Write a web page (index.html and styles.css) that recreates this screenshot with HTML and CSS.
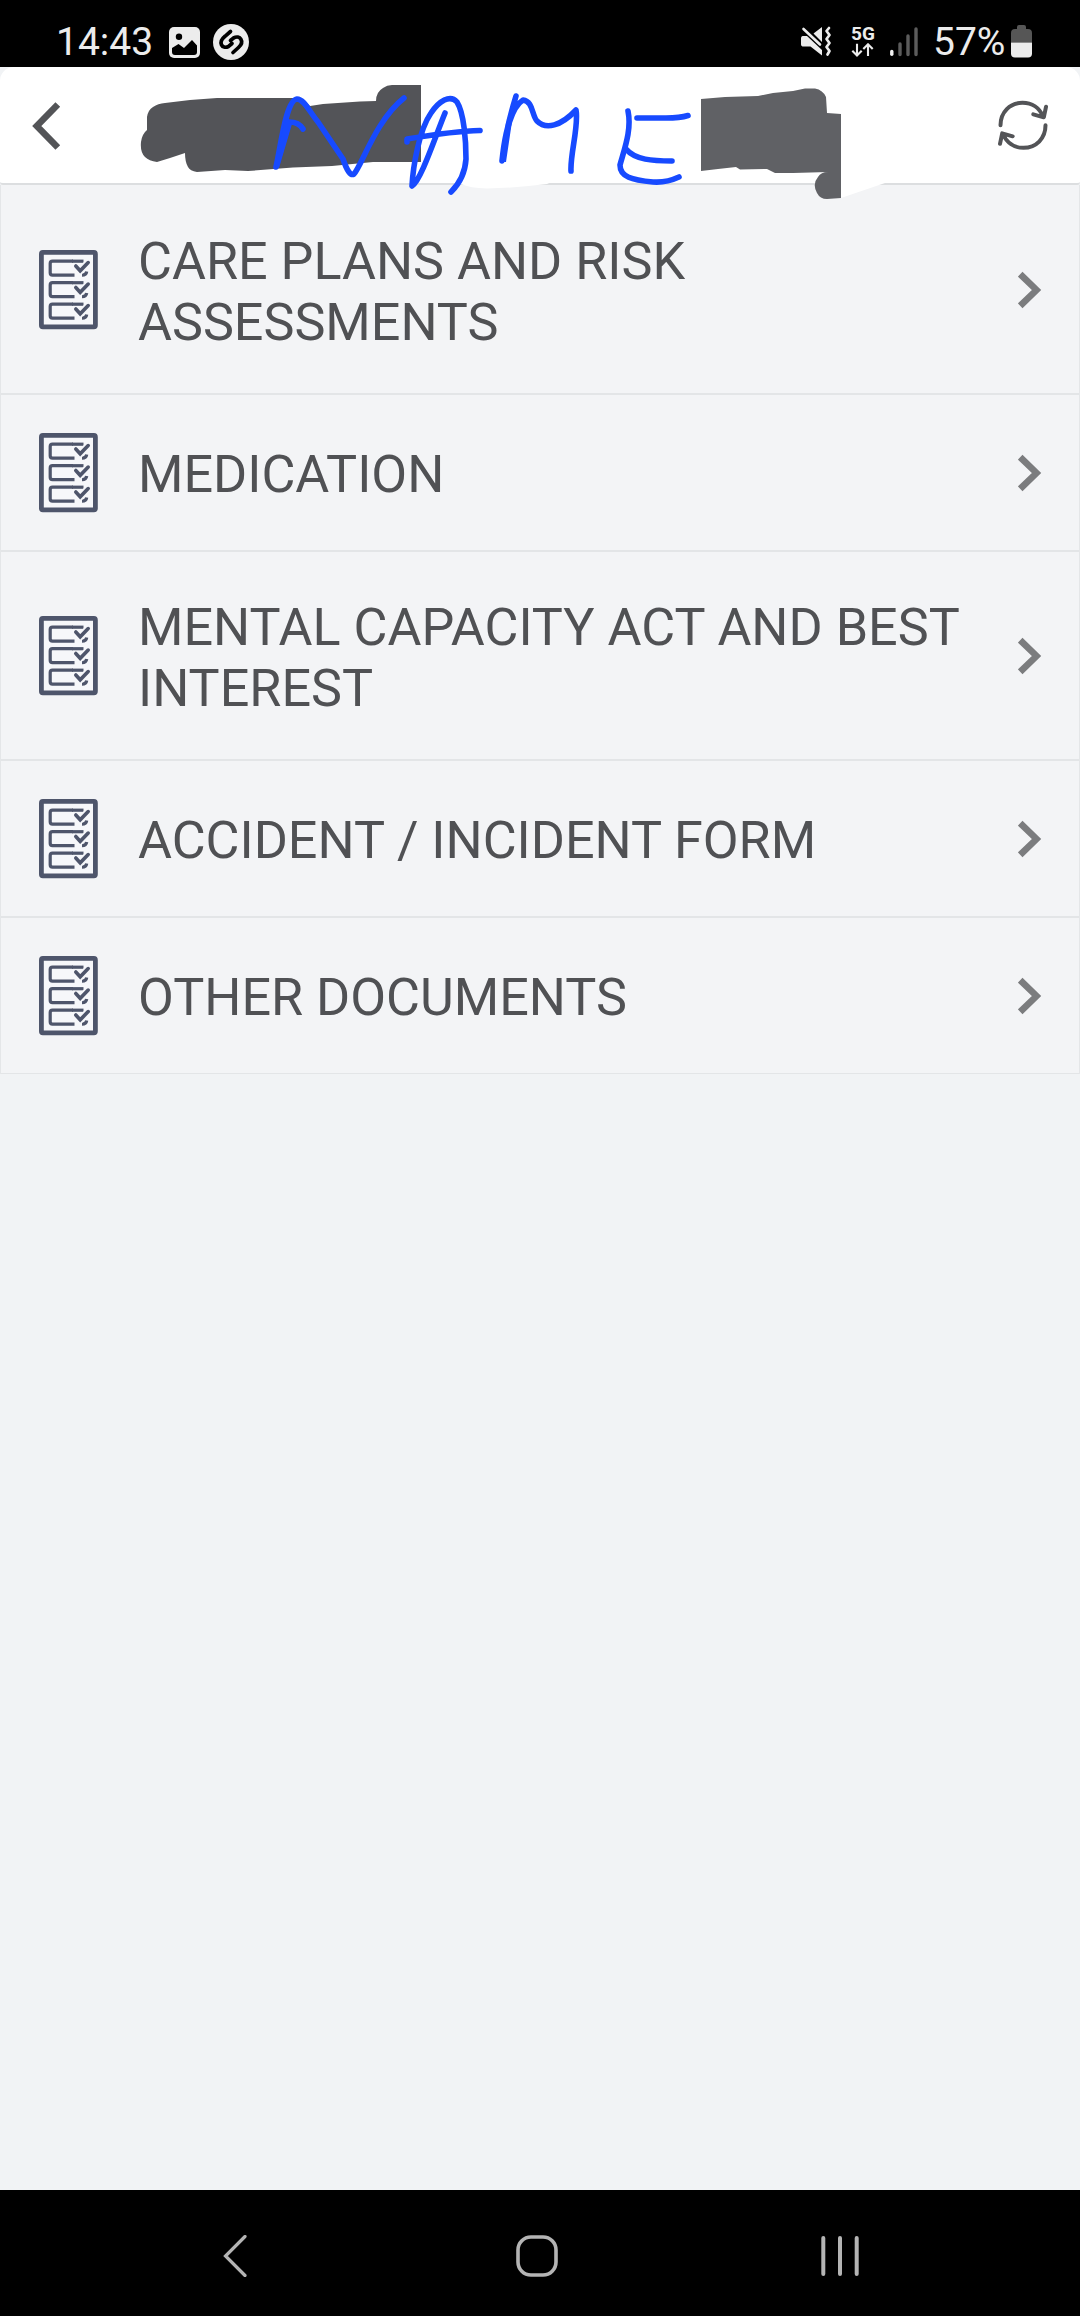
FILE: index.html
```html
<!DOCTYPE html>
<html lang="en">
<head>
<meta charset="utf-8">
<title>Documents</title>
<link rel="stylesheet" href="styles.css">
</head>
<body>
<svg class="defs" width="0" height="0" aria-hidden="true">
  <symbol id="form" viewBox="0 0 59 80">
    <rect x="2.4" y="2.4" width="54" height="74.4" rx="1.5" fill="#f6f7fa" stroke="#4e556b" stroke-width="4.8"/>
    <g id="line">
      <path d="M34 11.2H13.5Q11.2 11.2 11.2 13.5V22.8Q11.2 25.1 13.5 25.1H35.5M43 25.2Q47.2 25.2 47.7 21.5" fill="none" stroke="#4e556b" stroke-width="3.2"/>
      <path d="M33 11.2H44.5" stroke="#4e556b" stroke-width="3.2"/>
      <path d="M36.8 16L41.2 20.8L49.2 12.6" fill="none" stroke="#f6f7fa" stroke-width="7"/>
      <path d="M36.8 16L41.2 20.8L49.2 12.6" fill="none" stroke="#4e556b" stroke-width="3.6" stroke-linecap="round"/>
    </g>
    <use href="#line" y="21.5"/>
    <use href="#line" y="43"/>
  </symbol>
  <symbol id="chevron" viewBox="0 0 24 38">
    <path d="M2.2 3.2L18.5 19L2.2 34.800" fill="none" stroke="#7b7c7e" stroke-width="6.600"/>
  </symbol>
</svg>
<div class="screen">
  <div class="status">
    <span class="clock">14:43</span>
    <svg class="photo" width="31" height="31" viewBox="0 0 31 31">
      <rect width="31" height="31" rx="5" fill="#ececec"/>
      <circle cx="10" cy="9.7" r="3.2" fill="#000"/>
      <path d="M3 21L9.5 17L15 21L23 13L28 18.5V25Q28 28 25 28H6Q3 28 3 25Z" fill="#000"/>
    </svg>
    <svg class="shazam" width="36" height="36" viewBox="0 0 36 36">
      <circle cx="18" cy="18" r="18" fill="#ececec"/>
      <path d="M17.5 7.5L12 12.3C4.5 18.5 9 25.5 15.5 22.5L19 19.5M17.5 16.5L20.5 14C27 10.5 32 17.5 25.5 23.5L20 28.5" fill="none" stroke="#000" stroke-width="3.7" stroke-linecap="round"/>
    </svg>
    <span class="space"></span>
    <svg class="mute" width="31" height="31" viewBox="0 0 31 31">
      <path d="M1.5 10H6L21 24V29.5L9.5 20.5H1.5Q0 20 0 18.5V12Q0 10.5 1.5 10ZM12.5 7.5L21 1V16Z" fill="#ececec"/>
      <path d="M2.5 3L19 18.5" stroke="#ececec" stroke-width="2.6" stroke-linecap="round"/>
      <path d="M28 2L25.5 5L28.5 9L25.5 13L28.5 17L25.5 21L28.5 25L26.5 28.5" fill="none" stroke="#ececec" stroke-width="2.7" stroke-linejoin="round" stroke-linecap="round"/>
    </svg>
    <span class="network">
      <span class="fiveg">5G</span>
      <svg width="23" height="14" viewBox="0 0 23 14">
        <path d="M6 .8V12M1.3 7.8L6 12.5L10.7 7.8M17 13V2M12.3 6L17 1.3L21.7 6" fill="none" stroke="#ececec" stroke-width="2.1"/>
      </svg>
    </span>
    <svg class="signal" width="28" height="30" viewBox="0 0 28 30">
      <g stroke-width="3.4" stroke-linecap="round">
        <path d="M1.8 24.5V27.3" stroke="#f2f2f2"/>
        <path d="M10 17V27.5M18 9V27.5M26 2V27.5" stroke="#5c5c5c"/>
      </g>
    </svg>
    <span class="percent">57%</span>
    <svg class="battery" width="21" height="33" viewBox="0 0 21 33">
      <path d="M6 2Q6 0 8 0H13Q15 0 15 2V4H17Q21 4 21 8V17.5H0V8Q0 4 4 4H6Z" fill="#565656"/>
      <path d="M0 17.5H21V28.5Q21 32.5 17 32.5H4Q0 32.5 0 28.5Z" fill="#ececec"/>
    </svg>
  </div>

  <header class="header">
    <svg class="back" width="29" height="48" viewBox="0 0 29 48">
      <path d="M25.8 2.5L4.800 24L25.8 45.5" fill="none" stroke="#535457" stroke-width="6.600"/>
    </svg>
    <svg class="refresh" width="50" height="50" viewBox="0 0 50 50">
      <g id="arc" fill="none" stroke="#535457" stroke-width="4" stroke-linecap="round" stroke-linejoin="round">
        <path d="M2.5 25.3C2.5 12 12 2.8 24.5 2.8C34 2.8 41.5 8 45 16.5M35.3 14.3L45.8 17.3L48 6.8"/>
      </g>
      <use href="#arc" transform="rotate(180 25 25.3)"/>
    </svg>
    <svg class="scribble" width="1080" height="140" viewBox="0 67 1080 140">
      <path d="M455 178H560L547 184Q515 188 487 188.500Q470 188 461 184ZM835 178H900L885 183L841 198Z" fill="#fff"/>
      <path d="M141 142Q142 134 147 130V117Q148 110 153 107Q158 103.500 165 103L190 100L217 98H238L262 98H293Q304 99 310 106L323 104L360 101.500L376 101Q376 92 383 88Q387 85 392 85H421V162H373L332 166L293 167.500L248 171L225 170L197 172Q190 171 188 167Q185 162 185 153L170 158L157 162Q149 161 145 157Q140 152 141 142Z" fill="#535458"/>
      <path d="M701 99L725 97L758 96L773 93L793 91L805 88.500H815Q823 90 826 97L827 113L841 114V198L827 199Q820 199 817 193Q812 184 818 177Q821 172 828 172L793 173H775L767 169L740 169.500L736 167L718 169L701 171Z" fill="#606165"/>
      <g fill="none" stroke="#174aff" stroke-width="5.600" stroke-linecap="round" stroke-linejoin="round">
        <path d="M276 167C281 145 286 100 297 99C304 99 309 111 318 122L343 159Q349 177 354 174C362 165 376 120 404 98M276 167L289 122Q299 122 303 129M277 162L288 126"/>
        <path d="M445 113C434 140 421 180 412 186C413 167 419 130 431 113C439 101 450 94 457 102C464 113 466 141 466 159C465 176 456 187 451 192M407 142L407 139C425 136 455 131 480 130.500"/>
        <path d="M516 96C507 125 504 144 502 161C505 131 512 107 523 100C533 101 532 116 537 121C546 130 561 126 576 110C579 126 570 154 571 171"/>
        <path d="M628 111C632 130 624 150 620 165C620 177 632 180 653 182Q666 183 679 177M626 149C635 160 653 161 672 161M637 118H666Q680 118 688 115.500"/>
      </g>
      <path d="M274 166L284 124H292L279 168ZM500 162L506 123L514 108L506 162Z" fill="#174aff"/>
    </svg>
  </header>

  <main class="list">
    <div class="row tall"><svg class="form"><use href="#form"/></svg><span class="label">CARE PLANS AND RISK ASSESSMENTS</span><svg class="chevron"><use href="#chevron"/></svg></div>
    <div class="row"><svg class="form"><use href="#form"/></svg><span class="label">MEDICATION</span><svg class="chevron"><use href="#chevron"/></svg></div>
    <div class="row tall"><svg class="form"><use href="#form"/></svg><span class="label">MENTAL CAPACITY ACT AND BEST INTEREST</span><svg class="chevron"><use href="#chevron"/></svg></div>
    <div class="row"><svg class="form"><use href="#form"/></svg><span class="label">ACCIDENT / INCIDENT FORM</span><svg class="chevron"><use href="#chevron"/></svg></div>
    <div class="row"><svg class="form"><use href="#form"/></svg><span class="label">OTHER DOCUMENTS</span><svg class="chevron"><use href="#chevron"/></svg></div>
  </main>

  <nav class="nav">
    <svg width="24" height="42" viewBox="0 0 24 42"><path d="M22 1.500L2.500 21L22 40.500" fill="none" stroke="#b4b4b4" stroke-width="3.200" stroke-linecap="round"/></svg>
    <svg class="home" width="42" height="42" viewBox="0 0 42 42"><rect x="2" y="2" width="38" height="38" rx="13" fill="none" stroke="#b4b4b4" stroke-width="3.600"/></svg>
    <svg class="recent" width="38" height="42" viewBox="0 0 38 42"><path d="M2.300 3V39M19 3V39M35.700 3V39" stroke="#b4b4b4" stroke-width="4" stroke-linecap="round"/></svg>
  </nav>
</div>
</body>
</html>
```
FILE: styles.css
```css
body {
  margin: 0;
  font-family: Roboto, sans-serif;
  background: #f1f3f5;
}

.defs {
  position: absolute;
}

.screen {
  display: flex;
  flex-direction: column;
  width: 1080px;
  height: 2316px;
  overflow: hidden;
}

svg {
  display: block;
  flex: none;
}

.status {
  display: flex;
  align-items: flex-start;
  height: 67px;
  box-sizing: border-box;
  padding: 0 48px 0 56px;
  background: #000;
  color: #ececec;
}

.clock,
.percent {
  font-size: 39px;
  line-height: 46px;
  padding-top: 19px;
}

.clock {
  width: 113px;
}

.photo {
  margin-top: 27px;
}

.shazam {
  margin: 24px 0 0 13px;
}

.space {
  flex: 1;
}

.mute {
  margin-top: 26px;
}

.network {
  display: flex;
  flex-direction: column;
  width: 24px;
  margin: 25px 15px 0 19px;
}

.fiveg {
  height: 18px;
  font-size: 19px;
  font-weight: 700;
  line-height: 18px;
}

.signal {
  margin-top: 27px;
}

.percent {
  width: 74px;
  margin-left: 15px;
}

.battery {
  margin: 25px 0 0 4px;
}

.header {
  position: relative;
  display: flex;
  justify-content: space-between;
  height: 118px;
  box-sizing: border-box;
  padding: 0 32px;
  background: #fff;
  border-bottom: 2px solid #dcdee0;
  border-radius: 14px 14px 3px 3px;
}

.back {
  margin-top: 35px;
}

.refresh {
  margin: 33px 0 0;
}

.scribble {
  position: absolute;
  top: 0;
  left: 0;
}

.list {
  padding-top: 1px;
  border: solid #e4e6e8;
  border-width: 0 1px;
  background: #f3f4f6;
}

.row {
  display: flex;
  align-items: center;
  height: 157px;
  box-sizing: border-box;
  padding: 0 37px 0 38px;
  border-bottom: 2px solid #e3e5e7;
}

.row.tall {
  height: 209px;
}

.row:last-child {
  height: 156px;
  border-bottom-width: 1px;
}

.form {
  width: 59px;
  height: 80px;
}

.label {
  flex: 1;
  padding-top: 4px;
  margin: 0 38px 0 40px;
  font-size: 52.1px;
  line-height: 61px;
  color: #505154;
}

.chevron {
  width: 24px;
  height: 38px;
}

.nav {
  display: flex;
  align-items: flex-start;
  height: 126px;
  box-sizing: border-box;
  margin-top: auto;
  padding: 45px 0 0 223px;
  background: #000;
}

.home {
  margin-left: 269px;
}

.recent {
  margin-left: 263px;
}
```
